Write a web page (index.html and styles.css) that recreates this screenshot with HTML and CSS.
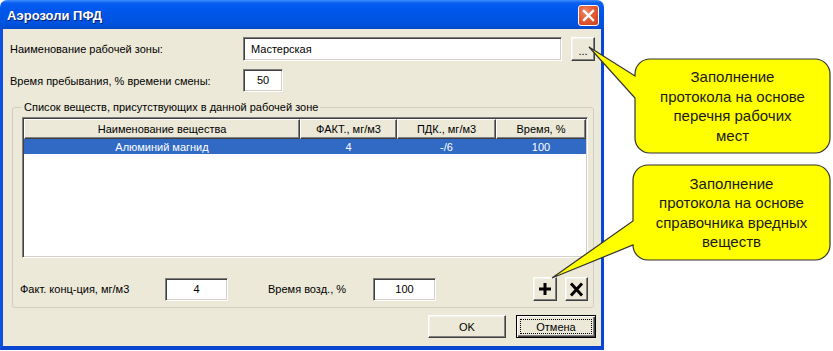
FILE: index.html
```html
<!DOCTYPE html>
<html lang="ru">
<head>
<meta charset="utf-8">
<title>Аэрозоли ПФД</title>
<link rel="stylesheet" href="styles.css">
</head>
<body>
<div class="window">
  <div class="titlebar">
    <span class="title">Аэрозоли ПФД</span>
    <div class="close">
      <svg width="13" height="13" viewBox="0 0 13 13"><path d="M2 2 L11 11 M11 2 L2 11" stroke="#fff" stroke-width="2.4" stroke-linecap="square"/></svg>
    </div>
  </div>
  <div class="frame">
    <div class="client">
      <div class="row row-zone">
        <span class="label">Наименование рабочей зоны:</span>
        <div class="edit edit-zone">Мастерская</div>
        <div class="btn btn-dots">...</div>
      </div>
      <div class="row row-time">
        <span class="label">Время пребывания, % времени смены:</span>
        <div class="edit edit-time">50</div>
      </div>
      <div class="group">
        <span class="legend">Список веществ, присутствующих в данной рабочей зоне</span>
        <div class="list">
          <div class="list-head">
            <div class="hcell c1">Наименование вещества</div>
            <div class="hcell c2">ФАКТ., мг/м3</div>
            <div class="hcell c3">ПДК., мг/м3</div>
            <div class="hcell c4">Время, %</div>
          </div>
          <div class="list-row selected">
            <div class="cell c1">Алюминий магнид</div>
            <div class="cell c2">4</div>
            <div class="cell c3">-/6</div>
            <div class="cell c4">100</div>
          </div>
        </div>
        <div class="group-bottom">
          <span class="label lbl-fact">Факт. конц-ция, мг/м3</span>
          <div class="edit edit-small">4</div>
          <span class="label lbl-time">Время возд., %</span>
          <div class="edit edit-small">100</div>
          <div class="btn btn-icon btn-plus">
            <svg width="14" height="14" viewBox="0 0 14 14"><path d="M7 1 V13 M1 7 H13" stroke="#000" stroke-width="3"/></svg>
          </div>
          <div class="btn btn-icon btn-del">
            <svg width="15" height="15" viewBox="0 0 15 15"><path d="M2 1.5 L13 13.5 M13 1.5 L2 13.5" stroke="#000" stroke-width="3"/></svg>
          </div>
        </div>
      </div>
      <div class="footer">
        <div class="btn btn-ok">OK</div>
        <div class="btn btn-cancel"><span class="focus">Отмена</span></div>
      </div>
    </div>
  </div>
</div>

<svg class="callouts" width="833" height="351" viewBox="0 0 833 351">
  <path d="M650 59 H815 A15 15 0 0 1 830 74 V138 A15 15 0 0 1 815 153 H650 A15 15 0 0 1 635 138 V98 L589 47 L635 76 V74 A15 15 0 0 1 650 59 Z" fill="#ffff00" stroke="#333" stroke-width="1.2"/>
  <path d="M648 165 H815 A15 15 0 0 1 830 180 V245 A15 15 0 0 1 815 260 H648 A15 15 0 0 1 633 245 L552 278 L633 221 V180 A15 15 0 0 1 648 165 Z" fill="#ffff00" stroke="#333" stroke-width="1.2"/>
</svg>
<div class="callout-text ct1">Заполнение<br>протокола на основе<br>перечня рабочих<br>мест</div>
<div class="callout-text ct2">Заполнение<br>протокола на основе<br>справочника вредных<br>веществ</div>
</body>
</html>
```

FILE: styles.css
```css
* { box-sizing: border-box; }
html, body {
  margin: 0;
  padding: 0;
  background: #ffffff;
}
body {
  position: relative;
  width: 833px;
  height: 351px;
  overflow: hidden;
  font-family: "Liberation Sans", Arial, sans-serif;
  font-size: 11px;
  color: #000;
}

.window {
  width: 604px;
  height: 350px;
  display: flex;
  flex-direction: column;
}

.titlebar {
  height: 29px;
  flex: none;
  border-radius: 7px 7px 0 0;
  background: linear-gradient(#3c8dff 0px, #0a5ff0 3px, #0058ee 8px, #0054e3 18px, #0052dd 25px, #0348c8 29px);
  display: flex;
  align-items: center;
  padding-left: 7px;
  padding-right: 5px;
}
.title {
  flex: 1;
  color: #fff;
  font-weight: bold;
  font-size: 13px;
  text-shadow: 1px 1px #0a1e6e;
  padding-top: 1px;
}
.close {
  width: 21px;
  height: 21px;
  border: 1px solid #fff;
  border-radius: 3px;
  background: radial-gradient(circle at 35% 30%, #f08a6a 0%, #e45a34 45%, #c9401b 100%);
  display: flex;
  align-items: center;
  justify-content: center;
  margin-top: 1px;
}

.frame {
  flex: 1;
  display: flex;
  border-left: 3px solid #0b4fe3;
  border-right: 3px solid #0a46d6;
  border-bottom: 4px solid #0a45d0;
}

.client {
  flex: 1;
  background: #ece9d8;
  display: flex;
  flex-direction: column;
  padding: 8px 5px 0 7px;
}

.row {
  display: flex;
  align-items: center;
}
.label {
  white-space: nowrap;
}
.row .label {
  width: 233px;
}
.row-time {
  margin-top: 8px;
}

.edit {
  background: #fff;
  border: 1px solid;
  border-color: #7f7f7f #ffffff #ffffff #7f7f7f;
  box-shadow: inset 1px 1px 0 #404040, inset -1px -1px 0 #d4d0c8;
  display: flex;
  align-items: center;
  justify-content: center;
  padding-bottom: 1px;
}
.edit-zone {
  width: 319px;
  height: 24px;
  justify-content: flex-start;
  padding-left: 7px;
}
.edit-time {
  width: 40px;
  height: 23px;
}
.edit-small {
  width: 63px;
  height: 23px;
}

.btn {
  background: #ece9d8;
  border: 1px solid;
  border-color: #ffffff #404040 #404040 #ffffff;
  box-shadow: inset -1px -1px 0 #808080, inset 1px 1px 0 #f5f4ee;
  display: flex;
  align-items: center;
  justify-content: center;
}
.btn-dots {
  width: 24px;
  height: 24px;
  margin-left: 9px;
  padding-top: 3px;
}

.group {
  margin-top: 15px;
  margin-left: 2px;
  width: 582px;
  height: 201px;
  border: 1px solid #d0d0bf;
  border-radius: 3px;
  position: relative;
  display: flex;
  flex-direction: column;
  padding: 9px 0 0 0;
}
.legend {
  position: absolute;
  left: 9px;
  top: -8px;
  background: #ece9d8;
  padding: 0 2px;
  line-height: 14px;
}

.list {
  margin-left: 9px;
  width: 566px;
  height: 141px;
  background: #fff;
  border: 1px solid;
  border-color: #808080 #ffffff #ffffff #808080;
  box-shadow: inset 1px 1px 0 #404040, inset -1px -1px 0 #d4d0c8;
  padding: 1px;
  display: flex;
  flex-direction: column;
}
.list-head {
  display: flex;
  height: 20px;
  flex: none;
}
.hcell {
  background: #ece9d8;
  border: 1px solid;
  border-color: #ffffff #404040 #404040 #ffffff;
  box-shadow: inset -1px -1px 0 #808080;
  display: flex;
  align-items: center;
  justify-content: center;
  white-space: nowrap;
}
.c1 { width: 276px; }
.c2 { width: 97px; }
.c3 { width: 99px; }
.c4 { width: 90px; }

.list-row {
  display: flex;
  height: 15px;
  flex: none;
}
.list-row.selected {
  background: #316ac5;
  color: #fff;
}
.cell {
  display: flex;
  align-items: center;
  justify-content: center;
  white-space: nowrap;
}

.group-bottom {
  display: flex;
  align-items: center;
  margin-top: 19px;
  padding-left: 7px;
}
.lbl-fact { width: 145px; }
.lbl-time { width: 105px; margin-left: 40px; }
.btn-icon {
  height: 24px;
}
.btn-plus {
  width: 24px;
  margin-left: 97px;
}
.btn-del {
  width: 23px;
  margin-left: 8px;
}

.footer {
  display: flex;
  justify-content: flex-end;
  margin-top: 7px;
  gap: 10px;
}
.btn-ok {
  width: 78px;
  height: 23px;
}
.btn-cancel {
  width: 80px;
  height: 23px;
  border: 1px solid #000;
  box-shadow: inset 1px 1px 0 #ffffff, inset -1px -1px 0 #404040, inset -2px -2px 0 #808080;
  padding: 3px;
}
.focus {
  flex: 1;
  height: 100%;
  border: 1px dotted #000;
  display: flex;
  align-items: center;
  justify-content: center;
}

.callouts {
  position: absolute;
  left: 0;
  top: 0;
  pointer-events: none;
}
.callout-text {
  position: absolute;
  display: flex;
  align-items: center;
  justify-content: center;
  text-align: center;
  font-family: "Liberation Sans", Arial, sans-serif;
  font-size: 15px;
  line-height: 19.5px;
  color: #1a1a1a;
}
.ct1 {
  left: 635px;
  top: 59px;
  width: 195px;
  height: 94px;
}
.ct2 {
  left: 633px;
  top: 165px;
  width: 197px;
  height: 95px;
}
```
